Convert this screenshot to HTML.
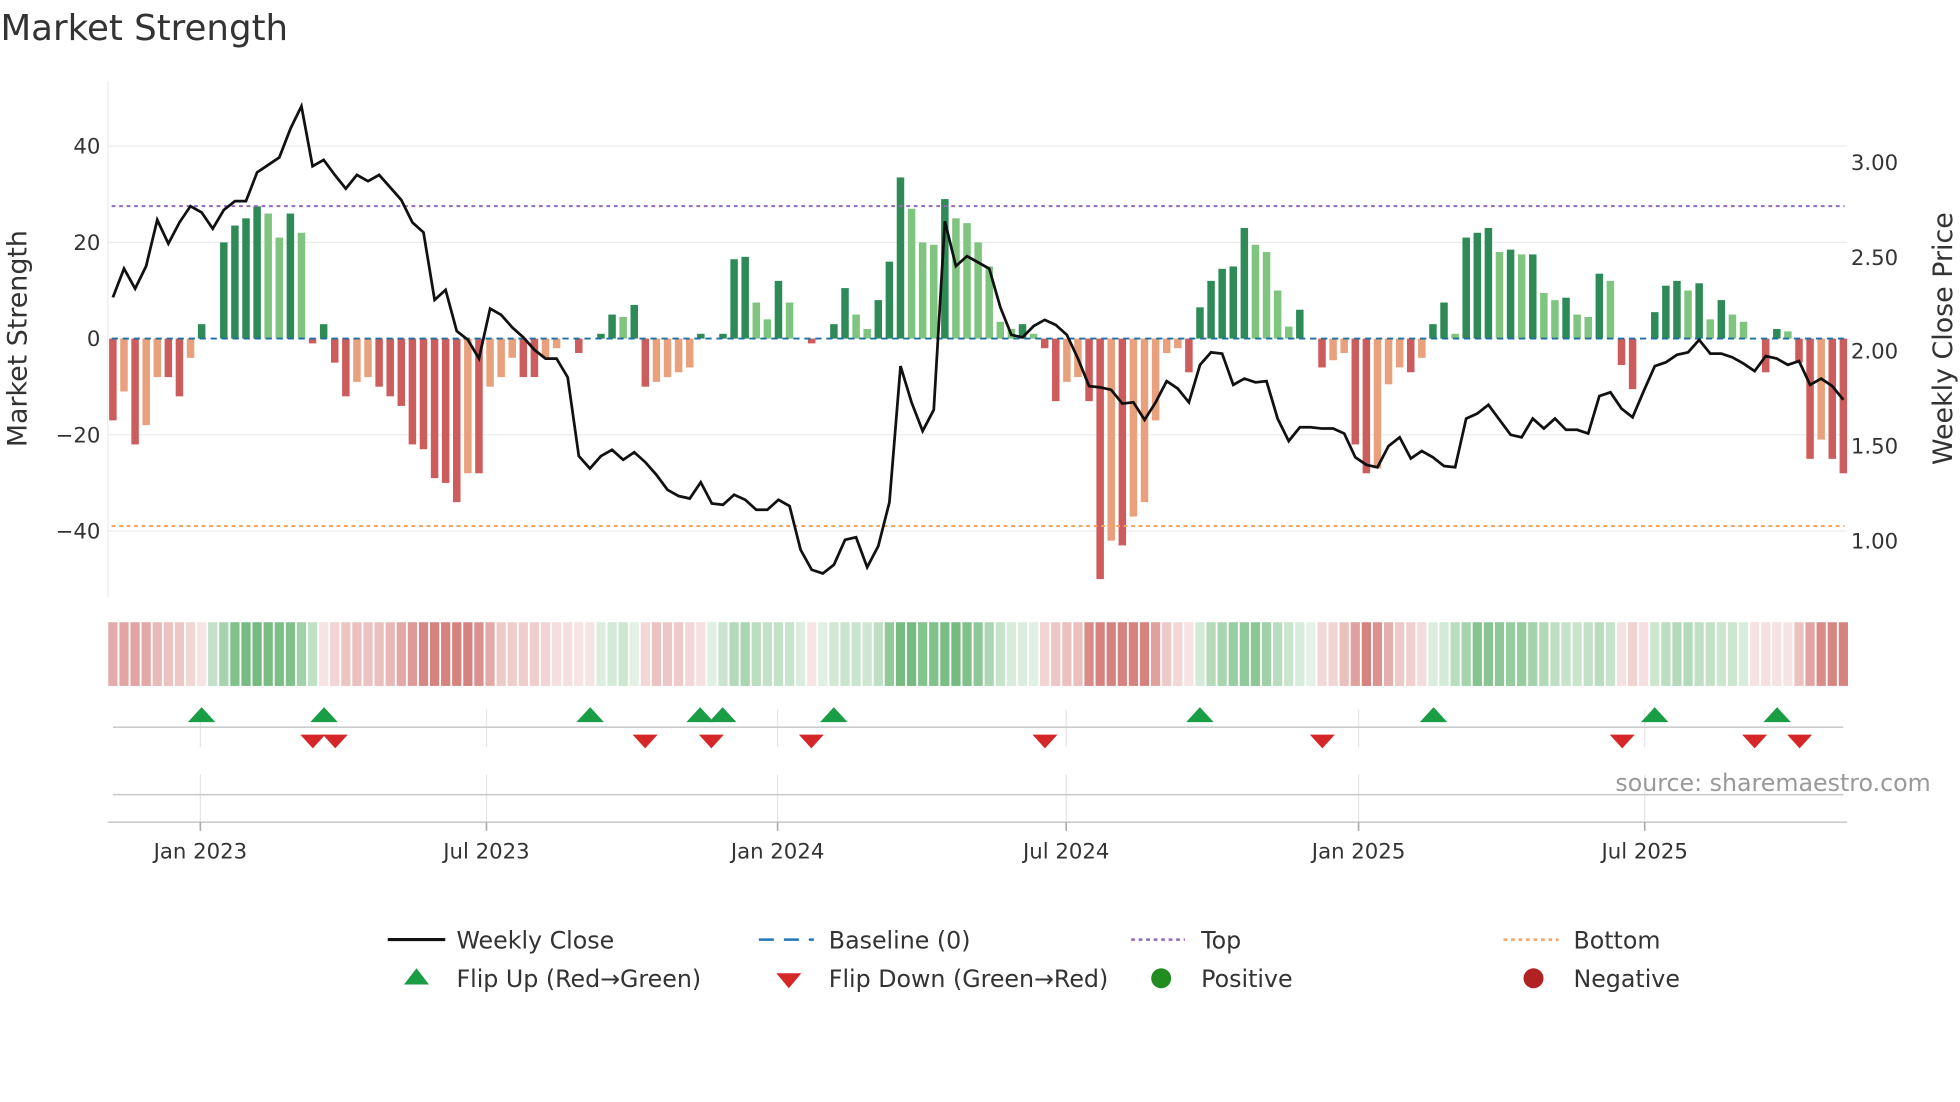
<!DOCTYPE html>
<html><head><meta charset="utf-8"><style>
html,body{margin:0;padding:0;background:#fff;}
svg{display:block;font-family:"DejaVu Sans","Liberation Sans",sans-serif;}
</style></head><body>
<svg id="s" width="1960" height="1102" viewBox="0 0 1568 882" xmlns="http://www.w3.org/2000/svg">
<rect width="1568" height="882" fill="#fff"/>
<text x="0" y="32" font-size="28.5" fill="#333">Market Strength</text>
<g stroke="#ececec" stroke-width="1">
<line x1="86" x2="1478" y1="117" y2="117"/><line x1="86" x2="1478" y1="194" y2="194"/>
<line x1="86" x2="1478" y1="348" y2="348"/><line x1="86" x2="1478" y1="425" y2="425"/>
<line x1="86" x2="86" y1="65" y2="478"/>
</g>
<g font-size="17" fill="#333" text-anchor="end">
<text x="80" y="123">40</text><text x="80" y="200">20</text><text x="80" y="277">0</text>
<text x="80" y="354">−20</text><text x="80" y="431">−40</text>
</g>
<g font-size="17" fill="#333">
<text x="1481" y="136">3.00</text><text x="1481" y="212">2.50</text><text x="1481" y="287">2.00</text>
<text x="1481" y="363">1.50</text><text x="1481" y="439">1.00</text>
</g>
<text transform="translate(21,271) rotate(-90)" font-size="21.5" fill="#333" text-anchor="middle">Market Strength</text>
<text transform="translate(1562,271) rotate(-90)" font-size="21.5" fill="#333" text-anchor="middle">Weekly Close Price</text>
<g id="bars"></g>
<line x1="89" x2="1476" y1="271" y2="271" stroke="#1f6f9f" stroke-width="1.5" stroke-dasharray="5,3.8"/>
<line x1="89" x2="1476" y1="165" y2="165" stroke="#9467bd" stroke-width="1.6" stroke-dasharray="3,3"/>
<line x1="89" x2="1476" y1="421" y2="421" stroke="#f4a460" stroke-width="1.6" stroke-dasharray="3,3"/>
<polyline id="price" fill="none" stroke="#111" stroke-width="2.2"/>
<g id="heat"></g>
<g stroke="#e6e6e6" stroke-width="1">
<line x1="160" x2="160" y1="568" y2="598"/><line x1="389" x2="389" y1="568" y2="598"/><line x1="622" x2="622" y1="568" y2="598"/><line x1="853" x2="853" y1="568" y2="598"/><line x1="1087" x2="1087" y1="568" y2="598"/><line x1="1316" x2="1316" y1="568" y2="598"/>
<line x1="160" x2="160" y1="620" y2="658"/><line x1="389" x2="389" y1="620" y2="658"/><line x1="622" x2="622" y1="620" y2="658"/><line x1="853" x2="853" y1="620" y2="658"/><line x1="1087" x2="1087" y1="620" y2="658"/><line x1="1316" x2="1316" y1="620" y2="658"/>
</g>
<g stroke="#ccc" stroke-width="1.3">
<line x1="90" x2="1475" y1="582" y2="582"/><line x1="90" x2="1475" y1="636" y2="636"/><line x1="86" x2="1478" y1="658" y2="658"/>
</g>
<g stroke="#aaa" stroke-width="1.3">
<line x1="160" x2="160" y1="658" y2="665"/><line x1="389" x2="389" y1="658" y2="665"/><line x1="622" x2="622" y1="658" y2="665"/><line x1="853" x2="853" y1="658" y2="665"/><line x1="1087" x2="1087" y1="658" y2="665"/><line x1="1316" x2="1316" y1="658" y2="665"/>
</g>
<g id="marks"></g>
<text x="1545" y="633" font-size="19" fill="#999" text-anchor="end">source: sharemaestro.com</text>
<g font-size="17" fill="#333" text-anchor="middle">
<text x="160" y="687">Jan 2023</text><text x="389" y="687">Jul 2023</text><text x="622" y="687">Jan 2024</text><text x="853" y="687">Jul 2024</text><text x="1087" y="687">Jan 2025</text><text x="1316" y="687">Jul 2025</text>
</g>
<g font-size="19" fill="#333">
<line x1="310" x2="356" y1="752" y2="752" stroke="#111" stroke-width="2.5"/><text x="365" y="759">Weekly Close</text>
<line x1="607" x2="651" y1="752" y2="752" stroke="#1f77b4" stroke-width="2" stroke-dasharray="12,8"/><text x="663" y="759">Baseline (0)</text>
<line x1="905" x2="948" y1="752" y2="752" stroke="#9467bd" stroke-width="2" stroke-dasharray="3,3"/><text x="961" y="759">Top</text>
<line x1="1203" x2="1247" y1="752" y2="752" stroke="#f4a460" stroke-width="2" stroke-dasharray="3,3"/><text x="1259" y="759">Bottom</text>
<polygon points="323,788 343,788 333,775" fill="#1a9e45"/><text x="365" y="790">Flip Up (Red→Green)</text>
<polygon points="621,779 641,779 631,791" fill="#d62728"/><text x="663" y="790">Flip Down (Green→Red)</text>
<circle cx="929" cy="783" r="8" fill="#228b22"/><text x="961" y="790">Positive</text>
<circle cx="1227" cy="783" r="8" fill="#b22222"/><text x="1259" y="790">Negative</text>
</g>
</svg>
<script>
var v=[-17,-11,-22,-18,-8,-8,-12,-4,3,0,20,23.5,25,27.5,26,21,26,22,-1,3,-5,-12,-9,-8,-10,-12,-14,-22,-23,-29,-30,-34,-28,-28,-10,-8,-4,-8,-8,-4,-2,0,-3,0,1,5,4.5,7,-10,-9,-8,-7,-6,1,0,1,16.5,17,7.5,4,12,7.5,0,-1,0,3,10.5,5,2,8,16,33.5,27,20,19.5,29,25,24,20,15,3.5,2,3,1,-2,-13,-9,-8,-13,-50,-42,-43,-37,-34,-17,-3,-2,-7,6.5,12,14.5,15,23,19.5,18,10,2.5,6,0,-6,-4.5,-3,-22,-28,-27,-9.5,-6,-7,-4,3,7.5,1,21,22,23,18,18.5,17.5,17.5,9.5,8,8.5,5,4.5,13.5,12,-5.5,-10.5,0,5.5,11,12,10,11.5,4,8,5,3.5,0,-7,2,1.5,-5,-25,-21,-25,-28];
var p=[238,215,231,213,176,195,178,165,170,183,168,161,161,138,132,126,103,85,133,128,140,151,140,145,140,150,160,178,186,240,232,265,272,287,247,252,262,270,280,287,287,302,365,375,365,360,368,362,370,380,392,397,399,386,403,404,396,400,408,408,400,405,440,456,459,452,432,430,454,437,402,293,322,345,328,177,213,205,210,215,246,268,270,261,256,260,268,287,309,310,312,323,322,336,322,305,311,322,292,282,283,308,303,306,305,335,353,342,342,343,343,347,366,372,374,357,350,367,361,366,373,374,335,331,324,336,348,350,335,343,335,344,344,347,317,314,327,334,313,293,290,284,282,272,283,283,286,291,297,285,287,292,289,308,303,309,320];
var n=v.length,x0=90,st=(1475-90)/(n-1),ns="http://www.w3.org/2000/svg";
function el(t,a,g){var e=document.createElementNS(ns,t);for(var k in a)e.setAttribute(k,a[k]);document.getElementById(g).appendChild(e);}
for(var i=0;i<n;i++){var x=x0+i*st,val=v[i],pr=i?v[i-1]:0,h=Math.abs(val)*3.85,c;
 if(val>=0)c=(val>=pr)?"#2e8b57":"#7fc47f";else c=(val<=pr)?"#cd5c5c":"#e9a07c";
 if(h>0.5)el("rect",{x:x-3,y:val>=0?271-h:271,width:6,height:h,fill:c},"bars");
 var s=(v[Math.max(0,i-1)]+val+v[Math.min(n-1,i+1)])/3,a=Math.min(1,0.2+Math.abs(s)/32);
 var hc=s>=0?"rgba(102,180,115,"+(a*0.9)+")":"rgba(200,90,85,"+(a*0.75)+")";
 el("rect",{x:x-3.7,y:498,width:7.4,height:51,fill:hc},"heat");}
var pts=[];for(var i=0;i<p.length;i++)pts.push((x0+i*st).toFixed(1)+","+p[i]);
document.getElementById("price").setAttribute("points",pts.join(" "));
[161,259,472,560,578,667,960,1147,1324,1422].forEach(function(x){el("polygon",{points:(x-11)+",578 "+(x+11)+",578 "+x+",566",fill:"#1a9e45"},"marks");});
[250,268,516,569,649,836,1058,1298,1404,1440].forEach(function(x){el("polygon",{points:(x-10)+",588 "+(x+10)+",588 "+x+",599",fill:"#d62728"},"marks");});
</script>
</body></html>
